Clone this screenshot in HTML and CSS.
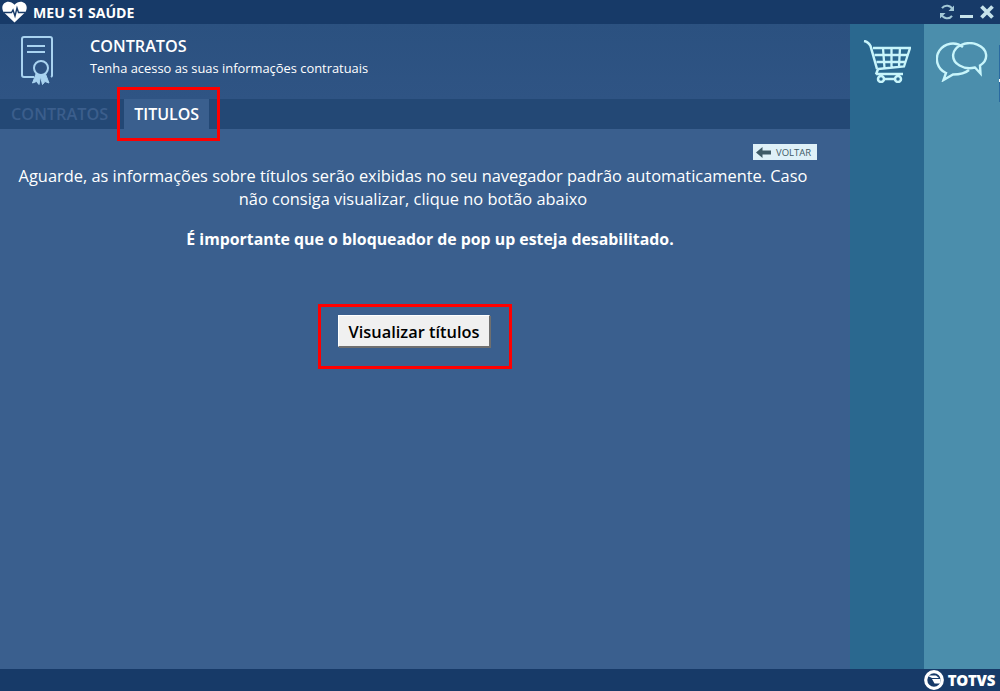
FILE: index.html
```html
<!DOCTYPE html>
<html lang="pt">
<head>
<meta charset="utf-8">
<title>Meu S1 Saúde</title>
<link rel="stylesheet" href="styles.css">
</head>
<body>
<div class="app">
  <header class="titlebar">
    <div class="brand">
      <svg class="heart" viewBox="0 0 25 22"><path d="M12.500 21.500 2.500 12C-.5 9-.3 4.500 2.200 2.200 5-.3 9.500.2 12.500 3.800 15.500.2 20-.3 22.800 2.200 25.300 4.500 25.500 9 22.500 12Z" fill="#fff"/><path d="M2 11.500h7.500l1.500-2.500 2 6 2-8 1.500 4.500H23" fill="none" stroke="#173a68" stroke-width="1.400"/></svg>
      <span>MEU S1 SAÚDE</span>
    </div>
    <div class="winctl">
      <svg class="refresh" viewBox="0 0 16 16"><path d="M13.500 5.500A6 6 0 0 0 3 4.200M2.500 10.500A6 6 0 0 0 13 11.800" fill="none" stroke="#a3c8d6" stroke-width="2"/><path d="M15 1.500V7H9.500zM1 14.500V9h5.500z" fill="#a3c8d6"/></svg>
      <span class="min"></span>
      <svg class="close" viewBox="0 0 14 14"><path d="M1.500 1.500 12.500 12.500M12.500 1.500 1.500 12.500" stroke="#c6e2ea" stroke-width="3.800"/></svg>
    </div>
  </header>
  <div class="body">
    <main class="main">
      <section class="head">
        <svg class="cert" viewBox="0 0 32 49" fill="none" stroke="#a9d3f0" stroke-width="2"><path d="M13 41H3a2 2 0 0 1-2-2V3a2 2 0 0 1 2-2h26a2 2 0 0 1 2 2v36a2 2 0 0 1-1 2"/><path d="M6 10h18M6 16h18" stroke-width="2.200"/><circle cx="20" cy="32" r="7"/><path d="M15 38l-3.500 9 4-1.500 2.500 3 1.500-8 2 8 2.500-3 4 1.500-3.500-9" fill="#a9d3f0" stroke-width="1"/></svg>
        <div class="head-text">
          <h1>CONTRATOS</h1>
          <p>Tenha acesso as suas informações contratuais</p>
        </div>
      </section>
      <nav class="tabs">
        <span class="tab">CONTRATOS</span>
        <span class="tab active">TITULOS</span>
        <span class="mark-tab"></span>
      </nav>
      <section class="content">
        <div class="back-row"><a class="back"><svg viewBox="0 0 15 11"><path d="M0 5.500 6.500 0v3.500H15v4H6.500V11z" fill="#3e5a66"/></svg>VOLTAR</a></div>
        <p class="msg">Aguarde, as informações sobre títulos serão exibidas no seu navegador padrão automaticamente. Caso não consiga visualizar, clique no botão abaixo</p>
        <p class="msg strong">É importante que o bloqueador de pop up esteja desabilitado.</p>
        <div class="btn-wrap"><button class="btn">Visualizar títulos</button></div>
      </section>
    </main>
    <aside class="side cart">
      <svg viewBox="0 0 48 43" fill="none" stroke="#c8f5fb" stroke-width="2.500"><path d="M1 1C4 1.500 6 3 7.500 6L14 29"/><path d="M10 8H47L41 26.500 15 29M11.500 15H45M13.500 22H43M20 8l1.500 20M28.500 8v19M37 8l-1 18" stroke-width="2.300"/><path d="M15 29l-2 5.500M13 34h27"/><path d="M21 39h10"/><circle cx="18" cy="39" r="3"/><circle cx="35" cy="39" r="3"/></svg>
    </aside>
    <aside class="side chat">
      <svg viewBox="0 0 52 40" fill="none" stroke="#c8f5fb" stroke-width="2.400"><path d="M27 5A16 15.500 0 1 0 10 31L7.500 38 17 32.500C22 32.500 29 31.500 33 28"/><path d="M44 23.400A16.500 12.500 0 1 0 39 25.500L44.500 31.500Z"/></svg>
      <span class="edge"></span>
    </aside>
  </div>
  <footer class="footer">
    <svg class="tlogo" viewBox="0 0 20 20"><circle cx="10" cy="10" r="8.300" fill="#173a68" stroke="#fff" stroke-width="3.200"/><path d="M8 9h8.500v4.500H10.500z" fill="#fff"/><path d="M3 5.500h9L15 8H8z" fill="#fff"/></svg>
    <span>TOTVS</span>
  </footer>
</div>
</body>
</html>
```
FILE: styles.css
```css
* { box-sizing: border-box; }
html, body { margin: 0; height: 100%; }
body { font-family: "Open Sans", "Noto Sans", sans-serif; color: #fff; overflow: hidden; }
.app { width: 1000px; height: 691px; display: flex; flex-direction: column; background: #3a5f8e; }
.titlebar { height: 24px; background: #173a68; display: flex; align-items: center; justify-content: space-between; flex: none; }
.brand { display: flex; align-items: center; gap: 6px; padding-left: 2px; font-size: 14.100px; font-weight: 700; }
.heart { width: 25px; height: 22px; }
.winctl { display: flex; align-items: center; gap: 5px; padding-right: 6px; }
.refresh { width: 16px; height: 16px; }
.min { width: 13px; height: 3px; background: #c6e2ea; margin-top: 9px; }
.close { width: 14px; height: 14px; margin-left: 2px; }
.body { flex: 1; display: flex; min-height: 0; }
.main { width: 850px; display: flex; flex-direction: column; background: #3a5f8e; }
.head { height: 75px; background: linear-gradient(#2b5180, #2f5484); display: flex; padding: 12px 0 0 21px; gap: 37px; }
.cert { width: 32px; height: 49px; }
.head-text h1 { margin: 0; font-size: 16.200px; font-weight: 600; line-height: 20px; }
.head-text p { margin: 4px 0 0; font-size: 12.900px; line-height: 16px; }
.tabs { height: 30px; background: #234875; display: flex; position: relative; }
.tab { font-size: 16.300px; font-weight: 600; line-height: 30px; color: #3b5e8c; padding: 0 11px; }
.tab.active { color: #fff; background: #3a5f8e; margin-left: 5px; padding: 0 10px; font-size: 16px; }
.mark-tab { position: absolute; left: 117px; top: -12px; width: 103px; height: 54px; border: 3px solid #f00; }
.content { flex: 1; padding: 15px 33px 0 0; display: flex; flex-direction: column; }
.back-row { display: flex; justify-content: flex-end; height: 16px; }
.back { width: 64px; height: 16px; background: #dff1f8; color: #3e5a66; font-size: 9.500px; display: flex; align-items: center; gap: 5px; padding-left: 3px; }
.back svg { width: 15px; height: 11px; }
.msg { margin: 4px 0 0 13px; width: 800px; font-size: 16.400px; line-height: 23px; text-align: center; }
.strong { font-weight: 700; margin: 17px 0 0 30px; font-size: 15.870px; line-height: 24px; }
.btn-wrap { align-self: flex-start; margin: 53px 0 0 318px; width: 194px; height: 65px; border: 3px solid #f00; display: flex; align-items: flex-start; padding: 8px 0 0 17px; }
.btn { width: 152px; height: 32px; background: #f0f0f0; border: 1px solid; border-color: #fff #6f6f6f #6f6f6f #fff; box-shadow: 1px 1px 0 #6f6f6f; font: 600 16.400px "Open Sans", "Noto Sans", sans-serif; color: #000; padding: 0; }
.side { display: flex; justify-content: center; position: relative; }
.cart { width: 74px; background: #2a688f; padding-top: 16px; }
.cart svg { width: 48px; height: 43px; }
.chat { width: 76px; background: #4b8eac; padding-top: 18px; }
.chat svg { width: 52px; height: 40px; }
.edge { position: absolute; right: 0; top: 21px; width: 1px; height: 57px; background: linear-gradient(#2a6aa0 60%, #fff 60%, #fff 65%, #2a6aa0 65%); }
.footer { height: 22px; background: #173a68; display: flex; justify-content: flex-end; align-items: center; gap: 4px; padding-right: 5px; font-size: 15px; letter-spacing: -0.3px; font-weight: 800; flex: none; }
.tlogo { width: 20px; height: 20px; }
```
